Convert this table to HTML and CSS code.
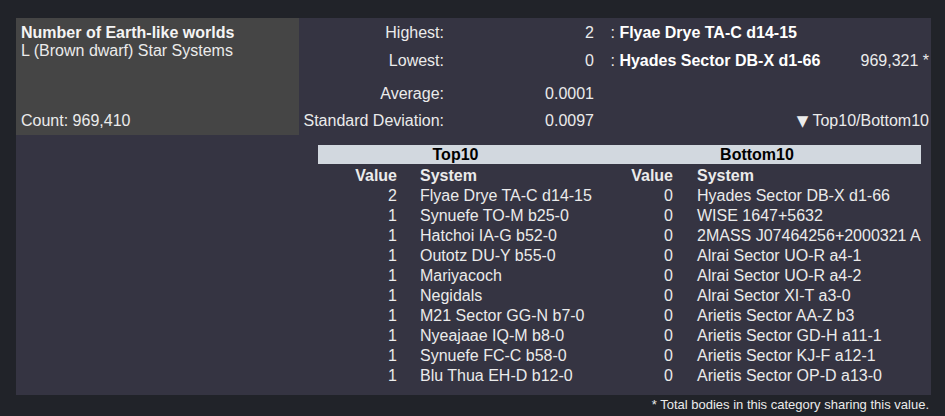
FILE: index.html
```html
<!DOCTYPE html>
<html>
<head>
<meta charset="utf-8">
<link rel="stylesheet" href="styles.css">
</head>
<body>
<div class="page">
  <div class="panel">
    <div class="top">
      <div class="info">
        <div class="title"><b>Number of Earth-like worlds</b><br>L (Brown dwarf) Star Systems</div>
        <div class="count">Count: 969,410</div>
      </div>
      <div class="stats">
        <div class="srow">
          <span class="lbl">Highest:</span>
          <span class="val">2</span>
          <span class="name">: <b>Flyae Drye TA-C d14-15</b></span>
          <span class="cnt"></span>
        </div>
        <div class="srow">
          <span class="lbl">Lowest:</span>
          <span class="val">0</span>
          <span class="name">: <b>Hyades Sector DB-X d1-66</b></span>
          <span class="cnt">969,321 *</span>
        </div>
        <div class="srow avg">
          <span class="lbl">Average:</span>
          <span class="val">0.0001</span>
        </div>
        <div class="srow">
          <span class="lbl">Standard Deviation:</span>
          <span class="val">0.0097</span>
          <span class="toggle"><span class="tri">▼</span> Top10/Bottom10</span>
        </div>
      </div>
    </div>
    <div class="ranks">
      <div class="rh">Top10</div>
      <div class="rh">Bottom10</div>
      <div class="v th">Value</div><div class="s1 th">System</div><div class="v th">Value</div><div class="s2 th">System</div>
      <div class="v">2</div><div class="s1">Flyae Drye TA-C d14-15</div><div class="v">0</div><div class="s2">Hyades Sector DB-X d1-66</div>
      <div class="v">1</div><div class="s1">Synuefe TO-M b25-0</div><div class="v">0</div><div class="s2">WISE 1647+5632</div>
      <div class="v">1</div><div class="s1">Hatchoi IA-G b52-0</div><div class="v">0</div><div class="s2">2MASS J07464256+2000321 A</div>
      <div class="v">1</div><div class="s1">Outotz DU-Y b55-0</div><div class="v">0</div><div class="s2">Alrai Sector UO-R a4-1</div>
      <div class="v">1</div><div class="s1">Mariyacoch</div><div class="v">0</div><div class="s2">Alrai Sector UO-R a4-2</div>
      <div class="v">1</div><div class="s1">Negidals</div><div class="v">0</div><div class="s2">Alrai Sector XI-T a3-0</div>
      <div class="v">1</div><div class="s1">M21 Sector GG-N b7-0</div><div class="v">0</div><div class="s2">Arietis Sector AA-Z b3</div>
      <div class="v">1</div><div class="s1">Nyeajaae IQ-M b8-0</div><div class="v">0</div><div class="s2">Arietis Sector GD-H a11-1</div>
      <div class="v">1</div><div class="s1">Synuefe FC-C b58-0</div><div class="v">0</div><div class="s2">Arietis Sector KJ-F a12-1</div>
      <div class="v">1</div><div class="s1">Blu Thua EH-D b12-0</div><div class="v">0</div><div class="s2">Arietis Sector OP-D a13-0</div>
    </div>
  </div>
  <div class="note">* Total bodies in this category sharing this value.</div>
</div>
</body>
</html>
```
FILE: styles.css
```css
body {
  margin: 0;
  background: #212329;
  font-family: "Liberation Sans", Arial, sans-serif;
  font-size: 16px;
  color: #ebebeb;
}
.page {
  padding: 18px 14px 0 16px;
}
.panel {
  background: #353442;
  padding-bottom: 10px;
}
.top {
  display: flex;
}
.info {
  width: 283px;
  height: 117px;
  box-sizing: border-box;
  background: #454545;
  padding: 6px 5px 5px;
  display: flex;
  flex-direction: column;
  justify-content: space-between;
  line-height: 18px;
}
.info b {
  color: #f4f4f4;
}
.stats {
  flex: 1;
  padding-right: 2px;
}
.srow {
  display: grid;
  grid-template-columns: 147px 150px 1fr auto;
  padding: 6px 0 4px;
  line-height: 18px;
  white-space: nowrap;
}
.srow.avg {
  padding: 7px 0 3px;
  margin-top: 4px;
}
.lbl, .val {
  text-align: right;
  padding-right: 2px;
}
.name {
  padding-left: 14.5px;
}
.name b {
  color: #fff;
}
.cnt {
  text-align: right;
}
.toggle {
  grid-column: 3 / 5;
  text-align: right;
}
.tri {
  font-family: "DejaVu Sans", sans-serif;
  font-size: 15px;
}
.ranks {
  margin: 10px 0 0 302px;
  width: 603px;
  display: grid;
  grid-template-columns: 81px 194px 82px 246px;
  white-space: nowrap;
}
.ranks > div {
  padding-top: 2px;
  line-height: 18px;
}
.ranks > .rh {
  grid-column: span 2;
  background: #d2d8df;
  color: #000;
  font-weight: bold;
  text-align: center;
  padding-top: 1px;
  margin-bottom: 1px;
}
.th {
  font-weight: bold;
}
.v {
  text-align: right;
  padding-right: 2px;
}
.s1 {
  padding-left: 21px;
}
.s2 {
  padding-left: 22px;
}
.note {
  text-align: right;
  font-size: 13px;
  line-height: 15px;
  padding: 2px 2px 0 0;
}
```
